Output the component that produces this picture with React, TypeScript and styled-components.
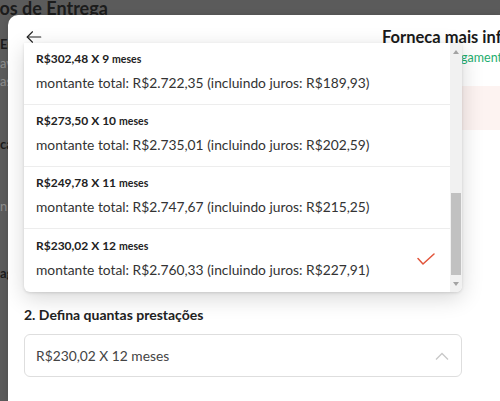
import { styled, createGlobalStyle } from "styled-components"

const GlobalStyle = createGlobalStyle`
    * { box-sizing: border-box; }
    html, body {
        margin: 0;
        width: 500px;
        height: 401px;
        overflow: hidden;
        background: #5b5b5b;
        font-family: Lato, "Open Sans", Arial, sans-serif;
    }
`

const Backdrop = styled.div`
    display: flex;
    flex-flow: column nowrap;
    white-space: nowrap;
`

const BgTitle = styled.h2`
    margin: -2px 0 0 -54px;
    font-size: 18px;
    line-height: 20px;
    font-weight: 700;
    color: #1c1c1c;
`

const BgLine = styled.p<{ $gap: number; $muted?: boolean }>`
    margin: ${({ $gap }) => $gap}px 0 0 0;
    font-size: 13px;
    line-height: 16px;
    font-weight: ${({ $muted }) => ($muted ? 400 : 700)};
    color: ${({ $muted }) => ($muted ? "#8e8e8e" : "#1c1c1c")};
`

const Modal = styled.div`
    position: absolute;
    top: 15px;
    left: 8px;
    width: 492px;
    height: 386px;
    background: #fff;
    border-radius: 10px 0 0 0;
    box-shadow: 0 0 6px rgba(0, 0, 0, .15);
    display: flex;
    flex-flow: column nowrap;
    overflow: hidden;
`

const Header = styled.div`
    display: flex;
    align-items: center;
    padding: 13px 0 0 17px;

    .back {
        color: #222;
        flex: none;
    }

    h1 {
        margin: 0 0 0 339px;
        font-size: 16.5px;
        line-height: 18px;
        font-weight: 700;
        color: #1a1a1a;
        white-space: nowrap;
    }
`

const Content = styled.div`
    display: flex;
    flex-flow: column nowrap;
    padding: 0 16px;
`

const Notice = styled.div`
    margin-left: 362px;
    display: flex;
    flex-flow: column nowrap;

    p {
        margin: 4px 0 0;
        font-size: 12.5px;
        line-height: 16px;
        color: #1fae6f;
        white-space: nowrap;
    }

    .alert {
        margin-top: 20px;
        height: 44px;
        width: 200px;
        border-radius: 4px;
        background: #fdf3f1;
    }
`

const Section = styled.div`
    margin-top: 176px;
    width: 438px;

    h3 {
        margin: 0;
        font-size: 14px;
        line-height: 18px;
        font-weight: 700;
        color: #222;
    }
`

const SelectBox = styled.div`
    margin-top: 10px;
    height: 43px;
    border: 1px solid #dedede;
    border-radius: 6px;
    padding: 0 12px 0 11px;
    display: flex;
    align-items: center;
    justify-content: space-between;
    font-size: 13.8px;
    color: #444;
`

const Dropdown = styled.div`
    position: absolute;
    top: 28px;
    left: 16px;
    width: 438px;
    height: 249px;
    background: #fff;
    border-radius: 0 0 6px 6px;
    box-shadow: 0 6px 22px rgba(0, 0, 0, .16), 0 1px 3px rgba(0, 0, 0, .12);
    display: flex;
    overflow: hidden;
`

const List = styled.ul`
    flex: 1;
    margin: 0;
    padding: 0;
    list-style: none;
`

const Option = styled.li<{ $selected?: boolean }>`
    display: flex;
    align-items: center;
    justify-content: space-between;
    padding: 8px 15px 11px 12px;
    border-top: 1px solid #ededed;
    height: ${({ $selected }) => ($selected ? "64px" : "62px")};

    &:first-child {
        border-top: none;
        height: 61px;
    }

    .title {
        font-size: 12px;
        line-height: 16px;
        font-weight: 700;
        color: #222;

        small {
            font-size: 10.5px;
        }
    }

    .total {
        margin-top: 6px;
        font-size: 13.8px;
        line-height: 20px;
        color: #333;
    }
`

const Scrollbar = styled.div`
    width: 12px;
    background: #f1f1f1;
    display: flex;
    flex-flow: column nowrap;
    align-items: center;

    .arrow {
        height: 17px;
        display: flex;
        align-items: center;
        justify-content: center;
    }

    .track {
        flex: 1;
        width: 100%;
        display: flex;
        flex-flow: column nowrap;
        justify-content: flex-end;
        padding: 0 1px;
    }

    .thumb {
        height: 82px;
        background: #c1c1c1;
    }
`

const options = [
    { value: "R$302,48 X 9", total: "R$2.722,35", interest: "R$189,93" },
    { value: "R$273,50 X 10", total: "R$2.735,01", interest: "R$202,59" },
    { value: "R$249,78 X 11", total: "R$2.747,67", interest: "R$215,25" },
    { value: "R$230,02 X 12", total: "R$2.760,33", interest: "R$227,91" },
]

function App() {
    const selected = 3

    return (
        <>
            <GlobalStyle />
            <Backdrop>
                <BgTitle>Métodos de Entrega</BgTitle>
                <BgLine $gap={18}>Entrega padrão</BgLine>
                <BgLine $gap={3} $muted>avaliação do pedido</BgLine>
                <BgLine $gap={2} $muted>as entregas</BgLine>
                <BgLine $gap={47}>cartão</BgLine>
                <BgLine $gap={46} $muted>n</BgLine>
                <BgLine $gap={51}>agamento</BgLine>
            </Backdrop>

            <Modal>
                <Header>
                    <svg className="back" width="18" height="18" viewBox="0 0 24 24" fill="none" stroke="currentColor" strokeWidth="1.5" strokeLinecap="round" strokeLinejoin="round">
                        <path d="M21 12H3" />
                        <path d="M10 5l-7 7 7 7" />
                    </svg>
                    <h1>Forneça mais informações</h1>
                </Header>

                <Content>
                    <Notice>
                        <p>Opções de pagamento</p>
                        <div className="alert" />
                    </Notice>

                    <Section>
                        <h3>2. Defina quantas prestações</h3>
                        <SelectBox>
                            <span>R$230,02 X 12 meses</span>
                            <svg width="14" height="8" viewBox="0 0 14 8" fill="none" stroke="#c8c8c8" strokeWidth="1.3">
                                <path d="M1 7.5L7 1.5l6 6" />
                            </svg>
                        </SelectBox>
                    </Section>
                </Content>

                <Dropdown>
                    <List>
                        {options.map((opt, index) => (
                            <Option key={index} $selected={index === selected}>
                                <div>
                                    <div className="title">{opt.value} <small>meses</small></div>
                                    <div className="total">montante total: {opt.total} (incluindo juros: {opt.interest})</div>
                                </div>
                                {index === selected && (
                                    <svg width="18" height="12" viewBox="0 0 18 12" fill="none" stroke="#e2553b" strokeWidth="1.5" strokeLinecap="round" strokeLinejoin="round">
                                        <path d="M1 5.5l5 5.5L17 1" />
                                    </svg>
                                )}
                            </Option>
                        ))}
                    </List>
                    <Scrollbar>
                        <div className="arrow">
                            <svg width="6" height="4" viewBox="0 0 6 4"><path d="M0 4L3 0l3 4z" fill="#a3a3a3" /></svg>
                        </div>
                        <div className="track">
                            <div className="thumb" />
                        </div>
                        <div className="arrow">
                            <svg width="6" height="4" viewBox="0 0 6 4"><path d="M0 0l3 4 3-4z" fill="#a3a3a3" /></svg>
                        </div>
                    </Scrollbar>
                </Dropdown>
            </Modal>
        </>
    )
}

export default App
